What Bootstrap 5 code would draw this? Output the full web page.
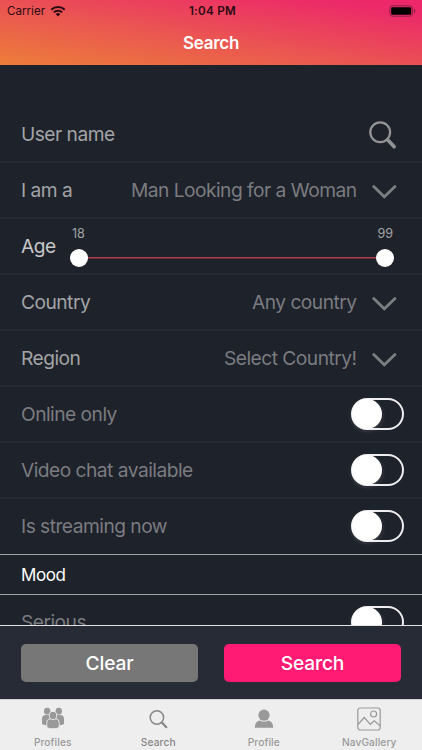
<!DOCTYPE html>
<html lang="en">
<head>
<meta charset="utf-8">
<meta name="viewport" content="width=device-width, initial-scale=1">
<title>Search</title>
<link href="https://cdn.jsdelivr.net/npm/bootstrap@5.3.0/dist/css/bootstrap.min.css" rel="stylesheet">
<style>
  body { font-family: Inter, "Liberation Sans", sans-serif; background: #1e222a; color: #a3a4a7; height: 750px; line-height: 1.2; }
  .topbar { height: 65px; background: linear-gradient(to top right, #ed7d39 0%, #ea5850 42%, #ec2a69 88%, #ee266b 100%); }
  .statusbar { height: 22px; font-size: 11.6px; color: #2a0b14; padding: 1px 6px 0 7px; }
  .statusbar .side { flex: 1 1 0; }
  .battery { margin-bottom: 2px; }
  .clock { font-weight: 600; letter-spacing: .3px; padding-left: 2px; }
  .title-text { height: 43px; font-size: 17px; font-weight: 600; letter-spacing: -.25px; color: #fff; }
  .fields { padding-top: 42px; background: #1e222a; }
  .field { height: 56px; flex: none; padding: 2px 18px 0 21px; border-bottom: 2px solid #272a32; font-size: 19.2px; letter-spacing: -.52px; }
  .field.pick { padding-right: 26px; }
  .pick svg { margin-right: -.5px; }
  .dim { color: #7b7c80; }
  .bright { color: #c6c7c9; }
  .field.plain-end { padding-bottom: 1px; border-bottom: 1px solid #a1a3a8; }
  .group-title { height: 40px; flex: none; padding: 2px 0 0 21px; font-size: 17px; letter-spacing: -.45px; color: #fff; border-bottom: 1px solid #a1a3a8; }
  .toggle { width: 53px; height: 32px; margin-bottom: 2px; border: 2px solid #eeeef0; border-radius: 16px; }
  .knob { width: 30px; height: 30px; margin: -1px 0 0 -1.5px; border-radius: 50%; background: #fff; box-shadow: 0 2px 5px rgba(255,255,255,.16); }
  .range { width: 324px; margin: 0 10px 1px 0; }
  .range-values { font-size: 12.6px; letter-spacing: 0; padding: 0 1px 0 2px; color: #a3a4a7; }
  .range-track { height: 18px; margin-top: 7px; background: linear-gradient(#b23c50, #b23c50) center / 100% 1.5px no-repeat; }
  .thumb { width: 18px; height: 18px; border-radius: 50%; background: #fff; }
  .actions { height: 74px; flex: none; background: #262b35; border-top: 1px solid #e3e3e6; padding: 0 21px; gap: 26px; }
  .actions .btn { height: 38px; padding: 1px 0 0; border: 0; border-radius: 5px; color: #fff; font-size: 19.2px; font-weight: 500; letter-spacing: -.15px; }
  .btn-clear, .btn-clear:hover { background: #777; }
  .btn-go, .btn-go:hover { background: #ff1a74; }
  .tabs { height: 51px; flex: none; background: #eee; border-top: 1px solid #d0d0d2; font-size: 10.2px; font-weight: 500; color: #999; letter-spacing: .1px; }
  .tabs a { color: inherit; width: 105.5px; padding-top: 5px; }
  .tabs span { padding-top: 3px; }
  .tabs a.current { color: #858585; }
  .tabs svg { height: 28px; flex: none; }
</style>
</head>
<body class="d-flex flex-column overflow-hidden">
<header class="topbar flex-shrink-0">
  <div class="statusbar d-flex align-items-center">
    <div class="side d-flex align-items-center">
      <span>Carrier</span>
      <svg class="ms-1" width="18" height="13" viewBox="0 0 18 13" fill="none" stroke="#2a0b14" stroke-width="2"><path d="M2.300 4.700a9.500 9.500 0 0 1 13.400 0M4.800 7.400a6 6 0 0 1 8.400 0"/><path d="M6.600 9.100a3.500 3.500 0 0 1 4.800 0L9 11.500z" fill="#2a0b14" stroke="none"/></svg>
    </div>
    <div class="clock">1:04 PM</div>
    <div class="side d-flex justify-content-end">
      <svg class="battery" width="27" height="12" viewBox="0 0 27 12"><rect x=".8" y=".8" width="22.800" height="10.400" rx="2.600" fill="none" stroke="#8c2148"/><rect x="2.200" y="2.300" width="20" height="7.400" rx="1.200" fill="#000"/><path d="M25 4v4q1.400-.6 1.400-2T25 4z" fill="#8c2148"/></svg>
    </div>
  </div>
  <h1 class="title-text d-flex align-items-center justify-content-center m-0">Search</h1>
</header>

<main class="fields d-flex flex-column flex-grow-1 overflow-hidden">
  <div class="field pick d-flex align-items-center justify-content-between">
    <span>User name</span>
    <svg width="30" height="30" viewBox="0 0 30 30" fill="none" stroke="#939396"><circle cx="13.200" cy="12.200" r="9.900" stroke-width="2.300"/><path d="M20.600 19.800 27.200 26.700" stroke-width="3.600" stroke-linecap="round"/></svg>
  </div>
  <div class="field pick d-flex align-items-center">
    <span>I am a</span><span class="dim ms-auto">Man Looking for a Woman</span>
    <svg class="ms-3 overflow-visible" viewBox="0 0 24 14" width="24" height="14" fill="none" stroke="#7d7e81" stroke-width="2.800" stroke-linecap="round"><path d="M.700 2.400 11.300 12.800 22 2.400"/></svg>
  </div>
  <div class="field d-flex align-items-center justify-content-between">
    <span class="bright">Age</span>
    <div class="range">
      <div class="range-values d-flex justify-content-between"><span>18</span><span>99</span></div>
      <div class="range-track d-flex justify-content-between"><span class="thumb"></span><span class="thumb"></span></div>
    </div>
  </div>
  <div class="field pick d-flex align-items-center">
    <span>Country</span><span class="dim ms-auto">Any country</span>
    <svg class="ms-3 overflow-visible" viewBox="0 0 24 14" width="24" height="14" fill="none" stroke="#7d7e81" stroke-width="2.800" stroke-linecap="round"><path d="M.700 2.400 11.300 12.800 22 2.400"/></svg>
  </div>
  <div class="field pick d-flex align-items-center">
    <span>Region</span><span class="dim ms-auto">Select Country!</span>
    <svg class="ms-3 overflow-visible" viewBox="0 0 24 14" width="24" height="14" fill="none" stroke="#7d7e81" stroke-width="2.800" stroke-linecap="round"><path d="M.700 2.400 11.300 12.800 22 2.400"/></svg>
  </div>
  <div class="field dim d-flex align-items-center justify-content-between"><span>Online only</span><div class="toggle"><div class="knob"></div></div></div>
  <div class="field dim d-flex align-items-center justify-content-between"><span>Video chat available</span><div class="toggle"><div class="knob"></div></div></div>
  <div class="field plain-end dim d-flex align-items-center justify-content-between"><span>Is streaming now</span><div class="toggle"><div class="knob"></div></div></div>
  <div class="group-title d-flex align-items-center">Mood</div>
  <div class="field dim d-flex align-items-center justify-content-between"><span>Serious</span><div class="toggle"><div class="knob"></div></div></div>
</main>

<div class="actions d-flex align-items-center">
  <button type="button" class="btn btn-clear flex-fill w-50">Clear</button>
  <button type="button" class="btn btn-go flex-fill w-50">Search</button>
</div>

<nav class="tabs d-flex">
  <a href="#" class="d-flex flex-column align-items-center text-decoration-none">
    <svg width="24" height="28" viewBox="0 0 24 28" fill="#999"><ellipse cx="6.200" cy="6.200" rx="3.200" ry="3.400"/><ellipse cx="17.800" cy="6.200" rx="3.200" ry="3.400"/><path d="M1 19v-5q0-4 4-4h14q4 0 4 4v5q-2.500 1.400-6 1.200H7Q3.500 20.400 1 19z"/><g stroke="#eee" stroke-width=".9"><path d="M5.800 22.500v-4.300q0-4.500 4.200-4.500h4q4.200 0 4.200 4.500v4.300q-2.500 1.300-6.200 1.300t-6.200-1.300z"/><ellipse cx="12" cy="10.500" rx="3.700" ry="4.100"/></g></svg>
    <span>Profiles</span>
  </a>
  <a href="#" class="current d-flex flex-column align-items-center text-decoration-none">
    <svg width="20" height="28" viewBox="0 0 20 28" fill="none" stroke="#858585"><circle cx="8.900" cy="12.500" r="6.700" stroke-width="1.500"/><path d="M13.900 17.600 18.300 22.200" stroke-width="2.200" stroke-linecap="round"/></svg>
    <span>Search</span>
  </a>
  <a href="#" class="d-flex flex-column align-items-center text-decoration-none">
    <svg width="20" height="28" viewBox="0 0 20 28" fill="#999"><circle cx="10" cy="10.200" r="5.600"/><path d="M.8 22.700q0-5.700 4.700-7.200 4.500 2.400 9 0 4.700 1.500 4.700 7.200z"/></svg>
    <span>Profile</span>
  </a>
  <a href="#" class="d-flex flex-column align-items-center text-decoration-none">
    <svg width="24" height="28" viewBox="0 0 24 28" fill="none" stroke="#999" stroke-width="1.200"><rect x=".8" y="3" width="22.400" height="22" rx="2.500"/><circle cx="16.600" cy="9" r="3"/><path d="M1 19.500 7.300 12.500 13.300 19.300 17.300 15.700 23 20.700"/></svg>
    <span>NavGallery</span>
  </a>
</nav>
<script src="https://cdn.jsdelivr.net/npm/bootstrap@5.3.0/dist/js/bootstrap.bundle.min.js"></script>
</body>
</html>
